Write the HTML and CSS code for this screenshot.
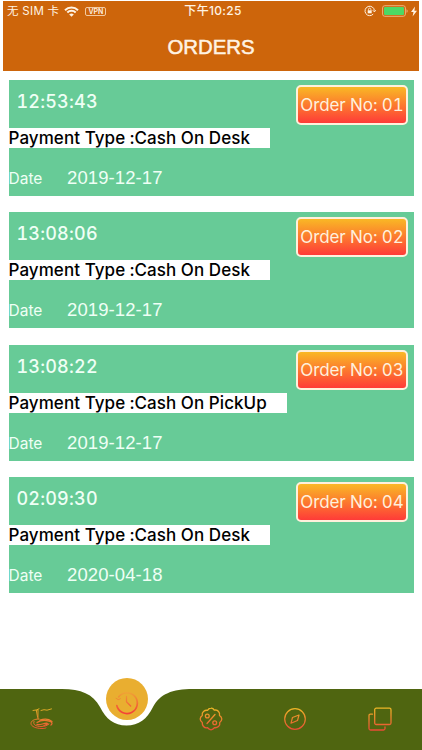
FILE: index.html
```html
<!DOCTYPE html>
<html lang="en">
<head>
  <meta charset="UTF-8" />
  <meta name="viewport" content="width=device-width, initial-scale=1.0" />
  <title>Orders</title>
  <link rel="stylesheet" href="styles.css">
</head>
<body>
  <header>
    <div class="status">
      <div class="status-left">
        <span class="carrier">无 SIM 卡</span>
        <svg class="wifi" width="15" height="11" viewBox="0 0 15 11" fill="none" stroke="#fff3e3" stroke-width="2">
          <path d="M1 4.2a9.2 9.2 0 0 1 13 0M3.3 6.5a6 6 0 0 1 8.4 0" />
          <path d="M7.5 10.8 5.2 8.5a3.3 3.3 0 0 1 4.6 0z" fill="#fff3e3" stroke="none" />
        </svg>
        <span class="vpn">VPN</span>
      </div>
      <span class="clock">下午10:25</span>
      <div class="status-right">
        <svg width="12" height="12" viewBox="0 0 12 12" fill="none" stroke="#fff3e3">
          <path d="M9.2 9.1a4.7 4.7 0 1 1 1.2-3.6M8.8 5.2l1.6 1.7 1.3-1.7" />
          <path d="M4.5 5.5V4.3a1.2 1.2 0 0 1 2.4 0v1.2" stroke-width=".8" />
          <path d="M3.7 5.3h4v3h-4z" fill="#fff3e3" stroke="none" />
        </svg>
        <svg width="26" height="12" viewBox="0 0 26 12">
          <rect x=".6" y=".7" width="22.8" height="10.6" rx="2.2" fill="none" stroke="#efb27b" />
          <rect x="2" y="2.1" width="20" height="7.8" rx="1" fill="#4cd964" />
          <path d="M24.5 4.2q1.2.4 1.2 1.8t-1.2 1.8z" fill="#efb27b" />
        </svg>
        <svg class="bolt" width="6" height="11" viewBox="0 0 6 11"><path d="M4 .5 0 6h2.5L1.6 10.5 6 4.7H3.4z" fill="#fff3e3" /></svg>
      </div>
    </div>
    <h1>ORDERS</h1>
  </header>

  <main class="orders">
    <article class="order">
      <div class="order-top"><span class="time">12:53:43</span><span class="number">Order No: 01</span></div>
      <p class="payment">Payment Type :Cash On Desk</p>
      <div class="date"><span class="label">Date</span><span class="day">2019-12-17</span></div>
    </article>
    <article class="order">
      <div class="order-top"><span class="time">13:08:06</span><span class="number">Order No: 02</span></div>
      <p class="payment">Payment Type :Cash On Desk</p>
      <div class="date"><span class="label">Date</span><span class="day">2019-12-17</span></div>
    </article>
    <article class="order">
      <div class="order-top"><span class="time">13:08:22</span><span class="number">Order No: 03</span></div>
      <p class="payment">Payment Type :Cash On PickUp</p>
      <div class="date"><span class="label">Date</span><span class="day">2019-12-17</span></div>
    </article>
    <article class="order">
      <div class="order-top"><span class="time">02:09:30</span><span class="number">Order No: 04</span></div>
      <p class="payment">Payment Type :Cash On Desk</p>
      <div class="date"><span class="label">Date</span><span class="day">2020-04-18</span></div>
    </article>
  </main>

  <nav class="tabs">
    <svg class="tabs-bg" width="422" height="73" viewBox="0 0 422 73">
      <path d="M0 12H62C81 12 93 17 100 30C106 42 114 48.500 126.500 48.500S147 42 153 30C160 17 172 12 193 12H422V73H0z" fill="#4f6510" />
    </svg>
    <a class="tab" href="#">
      <svg width="24" height="24" viewBox="0 0 24 24" fill="none">
        <defs>
          <linearGradient id="fire" gradientUnits="userSpaceOnUse" x1="0" y1="1" x2="0" y2="23">
            <stop offset="0" stop-color="#edb726" />
            <stop offset="1" stop-color="#e94b35" />
          </linearGradient>
        </defs>
        <g stroke="url(#fire)" stroke-linecap="round">
          <path d="M3 3.500 8 2.700V12M6.300 3.300l1.300 7M11 3.500l3-.8 3 .5 4.500-1.300M7.500 2.500l1.500-.7" stroke-width=".9" />
          <path d="M9 12C4 12 1 14 1 16.500c0 3 5 5 11 5 1.500 0 3 0 4-.6" />
          <path d="M4 14.500c-1.500 3 2 5 7 5 4 0 6-1 8-2.500" />
          <path d="M7 15.500c3-2 8-2.500 12-1.500 3 .7 4 2.500 2 4" stroke-width="1.300" />
          <path d="M7 17.500c4 1 6-1.500 10-1.300M10 13.200c4-1.500 9-1 12 1.200M14 18.500l4-1.700" stroke-width="1.300" />
        </g>
      </svg>
    </a>
    <a class="tab active" href="#">
      <svg width="42" height="42" viewBox="0 0 42 42" fill="none">
        <defs>
          <linearGradient id="sun" gradientUnits="userSpaceOnUse" x1="0" y1="13" x2="0" y2="35">
            <stop offset="0" stop-color="#efaa35" />
            <stop offset="1" stop-color="#f44336" />
          </linearGradient>
        </defs>
        <circle cx="21" cy="21" r="21" fill="#e9ae30" />
        <g stroke="url(#sun)" stroke-linecap="round" stroke-linejoin="round">
          <path d="M12.700 18.800a10.400 10.400 0 1 1-1.900 8.700" stroke-width="1.700" />
          <path d="M20.500 18.500v5.300l4.200 4.200" stroke-width="1.300" />
          <path d="M10 20.300l2.300 1.300 2-.9" />
        </g>
      </svg>
    </a>
    <a class="tab" href="#">
      <svg width="24" height="24" viewBox="0 0 24 24" fill="none" stroke="url(#fire)" stroke-width="1.300" stroke-linejoin="round">
        <path d="M12 1.200Q14 1 15.300 3.200 18 2.500 19.500 4.500 21 6 20.500 8.500 22.800 10 22.800 12T20.700 15.500Q21.300 18 19.500 19.500T15.500 20.700Q14 22.800 12 22.800T8.500 20.700Q6 21.300 4.500 19.500T3.300 15.500Q1.200 14 1.200 12T3.300 8.500Q2.700 6 4.500 4.500T8.500 3.300Q10 1.200 12 1.200z" />
        <path d="M16 7.500l-8 9" stroke-linecap="round" />
        <circle cx="8.300" cy="9" r="1.900" />
        <circle cx="15.700" cy="15.700" r="1.900" />
      </svg>
    </a>
    <a class="tab" href="#">
      <svg width="24" height="24" viewBox="0 0 24 24" fill="none" stroke="url(#fire)" stroke-width="1.200" stroke-linejoin="round">
        <circle cx="12" cy="12" r="10.300" />
        <path d="M16 8l-1.500 5.500L8 16.200l1.500-5.700z" />
      </svg>
    </a>
    <a class="tab" href="#">
      <svg width="24" height="24" viewBox="0 0 24 24" fill="none" stroke="url(#fire)" stroke-width="1.300" stroke-linecap="round">
        <rect x="6.700" y="1.200" width="16.300" height="16.300" rx="1.500" />
        <path d="M4.500 7.200H2.500Q1 7.200 1 8.700V21.500Q1 23 2.500 23H15.500Q17 23 17 21.500V20" />
      </svg>
    </a>
  </nav>
</body>
</html>
```

FILE: styles.css
```css
:root {
  --orange: #cd650b;
  --green: #67cb97;
  --cream: #fff3e3;
}

* {
  box-sizing: border-box;
}

body {
  font-family: Inter, "Noto Sans CJK SC", sans-serif;
  margin: 0;
  height: 750px;
  display: flex;
  flex-direction: column;
  background: #fff;
  overflow: hidden;
}

header {
  height: 69.5px;
  margin: 1px 3px 0;
  background: var(--orange);
  color: var(--cream);
}

h1 {
  margin: 14px 0 0;
  font: 20.4px/24px "Liberation Sans", sans-serif;
  text-align: center;
  -webkit-text-stroke: 0.5px var(--cream);
}

.status {
  display: grid;
  grid-template-columns: 1fr auto 1fr;
  align-items: center;
  height: 20px;
  padding: 0 2px 0 4px;
  font-size: 12px;
  line-height: 20px;
}

.status-left,
.status-right {
  display: flex;
  align-items: center;
}

.carrier {
  font-size: 11.5px;
  letter-spacing: 0.3px;
}

.wifi {
  margin: 0 6px 0 5px;
}

.vpn {
  height: 9px;
  padding: 0 2px;
  border: 1px solid #f3c9a0;
  border-radius: 2px;
  font-size: 7px;
  font-weight: 600;
  line-height: 7.5px;
}

.clock {
  padding-left: 2px;
  font-weight: 500;
  letter-spacing: 0.3px;
}

.status-right {
  justify-content: flex-end;
  gap: 6px;
}

.bolt {
  margin-left: -3px;
}

.orders {
  flex: 1;
  display: flex;
  flex-direction: column;
  gap: 16.3px;
  padding: 9.5px 8.5px 0;
  font-variant-numeric: tabular-nums;
}

.order {
  height: 116px;
  background: var(--green);
  color: #effff5;
}

.order-top {
  display: flex;
  justify-content: space-between;
  height: 48px;
  padding: 5px 5.5px 0 8px;
}

.time {
  font-size: 18px;
  font-weight: 500;
  line-height: 33px;
  letter-spacing: 0.2px;
}

.number {
  width: 112px;
  height: 40px;
  border: 2px solid #fff0dc;
  border-radius: 5px;
  background: linear-gradient(#f9bf24, #ff3439) border-box;
  color: #fff0dc;
  font-size: 17px;
  line-height: 37px;
  letter-spacing: -0.1px;
  text-align: center;
  white-space: nowrap;
}

.payment {
  width: fit-content;
  height: 20px;
  margin: 0;
  padding-right: 20.5px;
  background: #fff;
  color: #000;
  font-size: 17px;
  font-weight: 500;
  line-height: 21px;
  letter-spacing: 0.06px;
  white-space: nowrap;
}

.date {
  display: flex;
  align-items: baseline;
  margin-top: 18px;
  line-height: 24px;
}

.label {
  width: 58.5px;
  font-size: 15.5px;
}

.day {
  font-family: "Liberation Sans", sans-serif;
  font-size: 18.5px;
  letter-spacing: 0.1px;
}

.tabs {
  position: relative;
  display: grid;
  grid-template-columns: repeat(5, 1fr);
  height: 73px;
}

/* the bar dips under the selected tab */
.tabs-bg {
  position: absolute;
  inset: 0;
}

.tab {
  display: flex;
  justify-content: center;
  padding-top: 30px;
  z-index: 1;
}

.tab.active {
  padding-top: 1px;
}
```
